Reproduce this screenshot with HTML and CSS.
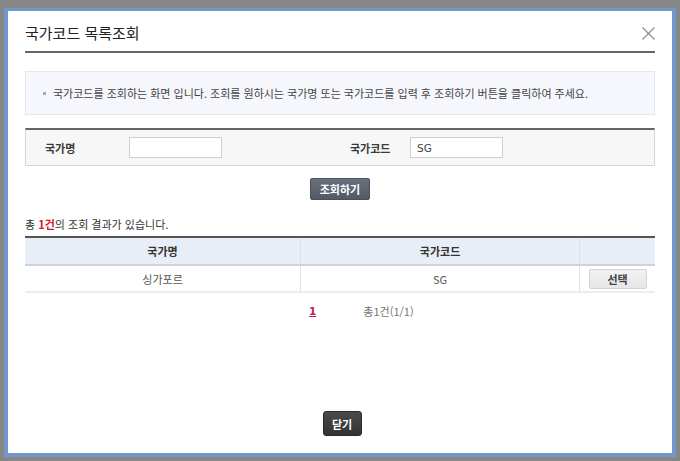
FILE: index.html
```html
<!DOCTYPE html>
<html lang="ko">
<head>
<meta charset="utf-8">
<title>국가코드 목록조회</title>
<link rel="stylesheet" href="styles.css">
</head>
<body>
<div class="backdrop">
  <div class="modal">
    <div class="modal-head">
      <h1 class="modal-title">국가코드 목록조회</h1>
      <span class="close-x" aria-label="닫기">
        <svg width="13" height="13" viewBox="0 0 13 13"><path d="M0.5 0.5L12.5 12.5M12.5 0.5L0.5 12.5" stroke="#8a8a8a" stroke-width="1.1" fill="none"/></svg>
      </span>
    </div>

    <div class="info-box">
      <span class="bullet"></span>국가코드를 조회하는 화면 입니다. 조회를 원하시는 국가명 또는 국가코드를 입력 후 조회하기 버튼을 클릭하여 주세요.
    </div>

    <div class="search-box">
      <label class="s-label s-label-name">국가명</label>
      <input class="s-input" type="text" value="">
      <label class="s-label s-label-code">국가코드</label>
      <input class="s-input" type="text" value="SG">
    </div>

    <div class="btn-row">
      <button class="btn-search">조회하기</button>
    </div>

    <p class="result-count">총 <strong class="count-num">1건</strong>의 조회 결과가 있습니다.</p>

    <table class="list">
      <thead>
        <tr>
          <th class="c1">국가명</th>
          <th class="c2">국가코드</th>
          <th class="c3"></th>
        </tr>
      </thead>
      <tbody>
        <tr>
          <td>싱가포르</td>
          <td>SG</td>
          <td><button class="btn-select">선택</button></td>
        </tr>
      </tbody>
    </table>

    <div class="paging">
      <a class="page-num">1</a>
      <span class="page-total">총1건(1/1)</span>
    </div>

    <div class="foot">
      <button class="btn-close">닫기</button>
    </div>
  </div>
</div>
</body>
</html>
```

FILE: styles.css
```css
html, body {
  margin: 0;
  padding: 0;
}
body {
  background: #878787;
  width: 680px;
  height: 461px;
  overflow: hidden;
  font-family: "Noto Sans CJK KR", "Noto Sans", sans-serif;
  color: #333;
}
.backdrop {
  padding: 8px 4px 4px 4px;
}
.modal {
  box-sizing: border-box;
  width: 672px;
  height: 449px;
  background: #fff;
  border: 4px solid #7197cc;
  border-top-width: 3px;
  padding: 0 17px 17px 17px;
  display: flex;
  flex-direction: column;
}
.modal-head {
  display: flex;
  align-items: center;
  justify-content: space-between;
  padding: 12px 0 8px 0;
  border-bottom: 2px solid #666;
}
.modal-title {
  margin: 0;
  font-size: 15px;
  font-weight: normal;
  line-height: 20px;
  color: #222;
}
.close-x {
  display: flex;
  width: 13px;
  height: 13px;
}
.info-box {
  margin-top: 18px;
  height: 44px;
  box-sizing: border-box;
  border: 1px solid #e3e7ef;
  background: #f5f7fc;
  display: flex;
  align-items: center;
  padding-left: 17px;
  font-size: 11px;
  color: #444;
}
.bullet {
  display: inline-block;
  width: 3px;
  height: 3px;
  background: #aaa;
  margin-right: 7px;
}
.search-box {
  margin-top: 13px;
  height: 38px;
  box-sizing: border-box;
  border-top: 2px solid #666;
  border-left: 1px solid #d6d6d6;
  border-right: 1px solid #d6d6d6;
  border-bottom: 1px solid #d6d6d6;
  background: #f7f7f7;
  display: flex;
  align-items: center;
  padding-left: 19px;
}
.s-label {
  font-size: 11px;
  font-weight: bold;
  color: #3a3a3a;
}
.s-label-name {
  width: 84px;
}
.s-label-code {
  width: 60px;
  margin-left: 128px;
}
.s-input {
  box-sizing: border-box;
  width: 93px;
  height: 21px;
  border: 1px solid #cfcfcf;
  background: #fff;
  padding: 0 6px;
  font-family: "DejaVu Sans", sans-serif;
  font-size: 10.5px;
  color: #444;
  outline: none;
}
.btn-row {
  display: flex;
  justify-content: center;
  margin-top: 12px;
}
.btn-search {
  width: 60px;
  height: 22px;
  border: 1px solid #4a515c;
  border-radius: 2px;
  background: linear-gradient(#68707d, #535a66);
  color: #fff;
  font-family: inherit;
  font-size: 11px;
  font-weight: bold;
  padding: 0;
}
.result-count {
  margin: 17px 0 0 0;
  font-size: 11px;
  line-height: 14px;
  color: #333;
}
.count-num {
  color: #d3172e;
}
.list {
  margin-top: 5px;
  width: 630px;
  border-collapse: collapse;
  border-top: 2px solid #555;
  font-size: 11px;
}
.list th {
  height: 26px;
  background: #e8eef7;
  border-bottom: 2px solid #cfd3d9;
  font-weight: bold;
  color: #333;
  padding: 0;
}
.list td {
  height: 25px;
  text-align: center;
  border-bottom: 2px solid #ececec;
  color: #555;
  padding: 0;
}
.list th + th, .list td + td {
  border-left: 1px solid #dde2ea;
}
.list .c1 { width: 276px; }
.list .c2 { width: 279px; }
.list .c3 { width: 75px; }
.btn-select {
  width: 58px;
  height: 20px;
  border: 1px solid #d3d3d3;
  border-radius: 2px;
  background: linear-gradient(#f2f2f2, #e6e6e6);
  font-family: inherit;
  font-size: 11px;
  font-weight: bold;
  color: #444;
  padding: 0;
}
.paging {
  display: flex;
  margin-top: 10px;
  font-size: 11px;
  line-height: 16px;
  padding-left: 284px;
}
.page-num {
  color: #c8204a;
  font-weight: bold;
  text-decoration: underline;
  font-family: "DejaVu Sans", sans-serif;
  font-size: 10.5px;
}
.page-total {
  margin-left: 47px;
  color: #777;
}
.foot {
  margin-top: auto;
  display: flex;
  justify-content: center;
}
.btn-close {
  width: 39px;
  height: 25px;
  border: 1px solid #2a2a2a;
  border-radius: 3px;
  background: linear-gradient(#4a4a4a, #333);
  color: #fff;
  font-family: inherit;
  font-size: 11px;
  font-weight: bold;
  padding: 0;
  margin-left: 4px;
}
```
